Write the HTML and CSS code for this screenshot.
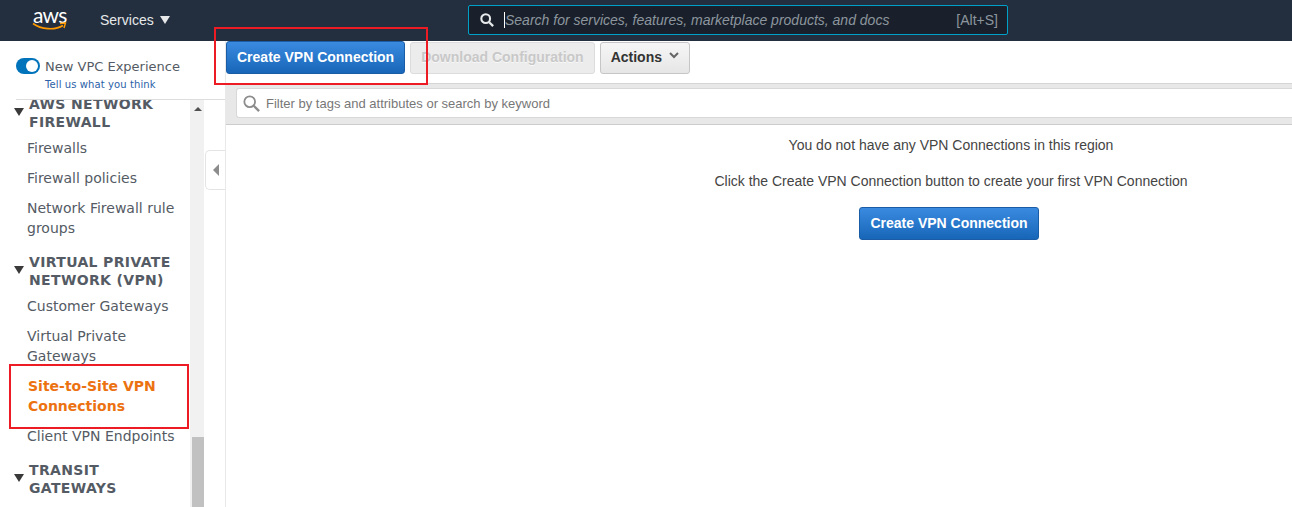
FILE: index.html
```html
<!DOCTYPE html>
<html lang="en">
<head>
    <meta charset="UTF-8">
    <title>VPN Connections</title>
    <link rel="stylesheet" href="styles.css">
</head>
<body>

<header class="topbar">
    <div class="logo">
        <span class="logo-text">aws</span>
        <svg class="logo-smile" width="35" height="9" viewBox="0 0 35 9">
            <path d="M1 1.5C9 7.5 23 8.500 31 3.500" fill="none" stroke="#f90" stroke-width="1.600"/>
            <path d="M28 1.500L33.500 1 32 6" fill="none" stroke="#f90" stroke-width="1.400"/>
        </svg>
    </div>
    <div class="services">Services <span class="caret"></span></div>
    <div class="search">
        <svg class="search-icon" width="14" height="14" viewBox="0 0 16 16">
            <circle cx="6.500" cy="6.500" r="5" fill="none" stroke="#e6e8ea" stroke-width="2.400"/>
            <path d="M10.500 10.500L15 15" stroke="#e6e8ea" stroke-width="2.600"/>
        </svg>
        <span class="cursor"></span>
        <span class="search-text">Search for services, features, marketplace products, and docs</span>
        <span class="search-key">[Alt+S]</span>
    </div>
</header>

<div class="layout">
    <aside class="sidebar">
        <div class="experience">
            <div class="toggle-row">
                <span class="toggle"></span>
                <span>New VPC Experience</span>
            </div>
            <a class="feedback">Tell us what you think</a>
        </div>
        <div class="nav-scroll">
            <nav class="nav">
                <section class="nav-group">
                    <h3 class="nav-title">AWS NETWORK FIREWALL</h3>
                    <a class="nav-item">Firewalls</a>
                    <a class="nav-item">Firewall policies</a>
                    <a class="nav-item">Network Firewall rule groups</a>
                </section>
                <section class="nav-group">
                    <h3 class="nav-title">VIRTUAL PRIVATE NETWORK (VPN)</h3>
                    <a class="nav-item">Customer Gateways</a>
                    <a class="nav-item">Virtual Private Gateways</a>
                    <a class="nav-item active">Site-to-Site VPN Connections</a>
                    <a class="nav-item">Client VPN Endpoints</a>
                </section>
                <section class="nav-group">
                    <h3 class="nav-title">TRANSIT GATEWAYS</h3>
                </section>
            </nav>
            <div class="scrollbar">
                <span class="scroll-up"></span>
                <span class="scroll-thumb"></span>
            </div>
            <div class="collapse"><span class="collapse-arrow"></span></div>
        </div>
    </aside>

    <main class="content">
        <div class="toolbar">
            <button class="btn primary">Create VPN Connection</button>
            <button class="btn disabled">Download Configuration</button>
            <button class="btn actions">Actions
                <svg width="10" height="7" viewBox="0 0 10 7"><path d="M1 1L5 5 9 1" fill="none" stroke="#666" stroke-width="2"/></svg>
            </button>
        </div>
        <div class="filter-bar">
            <div class="filter">
                <svg width="17" height="17" viewBox="0 0 19 19">
                    <circle cx="7.500" cy="7.500" r="6" fill="none" stroke="#8c8c8c" stroke-width="2"/>
                    <path d="M12 12L18 18" stroke="#8c8c8c" stroke-width="2.600"/>
                </svg>
                <span>Filter by tags and attributes or search by keyword</span>
            </div>
        </div>
        <div class="empty">
            <p class="empty-line">You do not have any VPN Connections in this region</p>
            <p class="empty-line">Click the Create VPN Connection button to create your first VPN Connection</p>
            <button class="btn primary">Create VPN Connection</button>
        </div>
    </main>
</div>

<!-- red annotation boxes from the screenshot -->
<div class="mark mark-top"></div>
<div class="mark mark-side"></div>

</body>
</html>
```

FILE: styles.css
```css
* {
    box-sizing: border-box;
}
html, body {
    height: 100%;
}
body {
    margin: 0;
    font-family: "Liberation Sans", Arial, sans-serif;
    overflow: hidden;
    background: #fff;
}

/* Top bar */
.topbar {
    height: 41px;
    background: #232f3e;
    display: flex;
    align-items: center;
    color: #e6e8ea;
    position: relative;
}
.logo {
    width: 100px;
    padding-left: 32px;
    display: flex;
    flex-direction: column;
    margin-top: -6px;
}
.logo-text {
    font-family: Lato, "Liberation Sans", sans-serif;
    font-size: 21px;
    line-height: 20px;
    color: #fff;
    letter-spacing: -0.8px;
    padding-left: 1px;
}
.logo-smile {
    margin-top: -3px;
}
.services {
    font-size: 14px;
    width: 368px;
    display: flex;
    align-items: center;
    gap: 6px;
    margin-top: -2px;
}
.caret {
    width: 0;
    height: 0;
    border-left: 5.500px solid transparent;
    border-right: 5.500px solid transparent;
    border-top: 8px solid #e6e8ea;
}
.search {
    width: 540px;
    height: 30px;
    margin-top: -1px;
    background: #19202b;
    border: 1px solid #00a1c9;
    border-radius: 2px;
    display: flex;
    align-items: center;
    padding: 0 9px 0 11px;
}
.cursor {
    width: 1px;
    height: 16px;
    background: #fff;
    margin-left: 10px;
}
.search-text {
    font-size: 14px;
    font-style: italic;
    color: #8d969e;
    flex: 1;
}
.search-key {
    font-size: 14px;
    color: #8d969e;
}

.layout {
    display: flex;
    height: 466px;
}

/* Sidebar */
.sidebar {
    width: 226px;
    flex: none;
    border-right: 1px solid #e9e9e9;
    font-family: "DejaVu Sans", Verdana, sans-serif;
    color: #545b64;
    display: flex;
    flex-direction: column;
}
.experience {
    height: 59px;
    margin-left: 16px;
    padding-top: 16px;
    border-bottom: 1px solid #ddd;
    font-size: 13px;
    flex: none;
}
.toggle-row {
    display: flex;
    align-items: center;
    gap: 5px;
    height: 18px;
}
.toggle {
    width: 24px;
    height: 16px;
    border-radius: 8px;
    background: #0073bb;
    position: relative;
}
.toggle::after {
    content: "";
    position: absolute;
    right: 2px;
    top: 2px;
    width: 12px;
    height: 12px;
    border-radius: 50%;
    background: #fff;
}
.feedback {
    display: block;
    margin: 3px 0 0 29px;
    font-size: 10px;
    line-height: 14px;
    letter-spacing: 0.1px;
    color: #2b5fa8;
}
.nav-scroll {
    flex: 1;
    position: relative;
    overflow: hidden;
}
.nav {
    width: 190px;
    margin-top: -5px;
    padding-left: 27px;
}
.nav-group {
    margin-bottom: 10px;
}
.nav-title {
    margin: 0 0 2px;
    padding-left: 2px;
    max-width: 152px;
    font-size: 14px;
    line-height: 18px;
    font-weight: bold;
    letter-spacing: 0.35px;
    position: relative;
}
.nav-title::before {
    content: "";
    position: absolute;
    left: -13px;
    top: 13px;
    border-left: 5px solid transparent;
    border-right: 5px solid transparent;
    border-top: 8px solid #3a3a3a;
}
.nav-item {
    display: block;
    padding: 5px 0;
    font-size: 14px;
    line-height: 20px;
}
.nav-item.active {
    color: #ec7211;
    font-weight: bold;
    padding-left: 1px;
}
.scrollbar {
    position: absolute;
    left: 190px;
    top: 0;
    bottom: 0;
    width: 14px;
    background: #f1f1f1;
}
.scroll-up {
    position: absolute;
    left: 4px;
    top: 7px;
    border-left: 4px solid transparent;
    border-right: 4px solid transparent;
    border-bottom: 4px solid #505050;
}
.scroll-thumb {
    position: absolute;
    left: 2px;
    right: 0;
    top: 337px;
    bottom: 0;
    background: #c1c1c1;
}
.collapse {
    position: absolute;
    left: 205px;
    top: 50px;
    width: 21px;
    height: 40px;
    background: #fff;
    border: 1px solid #e4e4e4;
    border-right: 0;
    border-radius: 5px 0 0 5px;
    display: flex;
    align-items: center;
    padding-left: 7px;
}
.collapse-arrow {
    border-top: 6px solid transparent;
    border-bottom: 6px solid transparent;
    border-right: 6px solid #8c8c8c;
}

/* Main area */
.content {
    flex: 1;
    min-width: 0;
}
.toolbar {
    height: 42px;
    display: flex;
    gap: 5px;
    align-items: flex-start;
}
.btn {
    font-family: "Liberation Sans", Arial, sans-serif;
    font-size: 14px;
    font-weight: bold;
    height: 33px;
    padding: 0 10px 2px;
    border-radius: 3px;
    border: 1px solid #c6c6c6;
    white-space: nowrap;
}
.btn.primary {
    color: #fff;
    border-color: #1a5da6;
    background: linear-gradient(#3a8ae0, #1766b8);
}
.btn.disabled {
    color: #c8c8c8;
    background: #ececec;
    border-color: #dcdcdc;
    margin-top: 1px;
    height: 32px;
    text-shadow: 0 1px 0 #f8f8f8;
}
.btn.actions {
    color: #333;
    background: linear-gradient(#f6f6f6, #e6e6e6);
    margin-top: 1px;
    height: 32px;
}
.btn.actions svg {
    margin-left: 3px;
    vertical-align: 3px;
}
.filter-bar {
    height: 42px;
    background: #e8e8e8;
    border-top: 1px solid #d5d5d5;
    border-bottom: 1px solid #ccc;
    padding: 4px 0 0 10px;
}
.filter {
    height: 30px;
    background: #fff;
    border: 1px solid #d8d8d8;
    border-right: 0;
    border-radius: 3px 0 0 3px;
    display: flex;
    align-items: center;
    gap: 6px;
    padding-left: 6px;
    font-size: 13px;
    color: #777;
}
/* left padding puts the centre of the column where the screenshot has it */
.empty {
    display: flex;
    flex-direction: column;
    align-items: center;
    padding-top: 12px;
    padding-left: 384px;
    color: #444;
}
.empty-line {
    margin: 0 0 20px;
    font-size: 14px;
    line-height: 16px;
}
.empty .btn {
    margin: -2px 4px 0 0;
}

/* Annotation boxes */
.mark {
    position: absolute;
    border: 2px solid #ed1c24;
}
.mark-top {
    left: 214px;
    top: 27px;
    width: 214px;
    height: 58px;
}
.mark-side {
    left: 9px;
    top: 364px;
    width: 180px;
    height: 65px;
}
```
